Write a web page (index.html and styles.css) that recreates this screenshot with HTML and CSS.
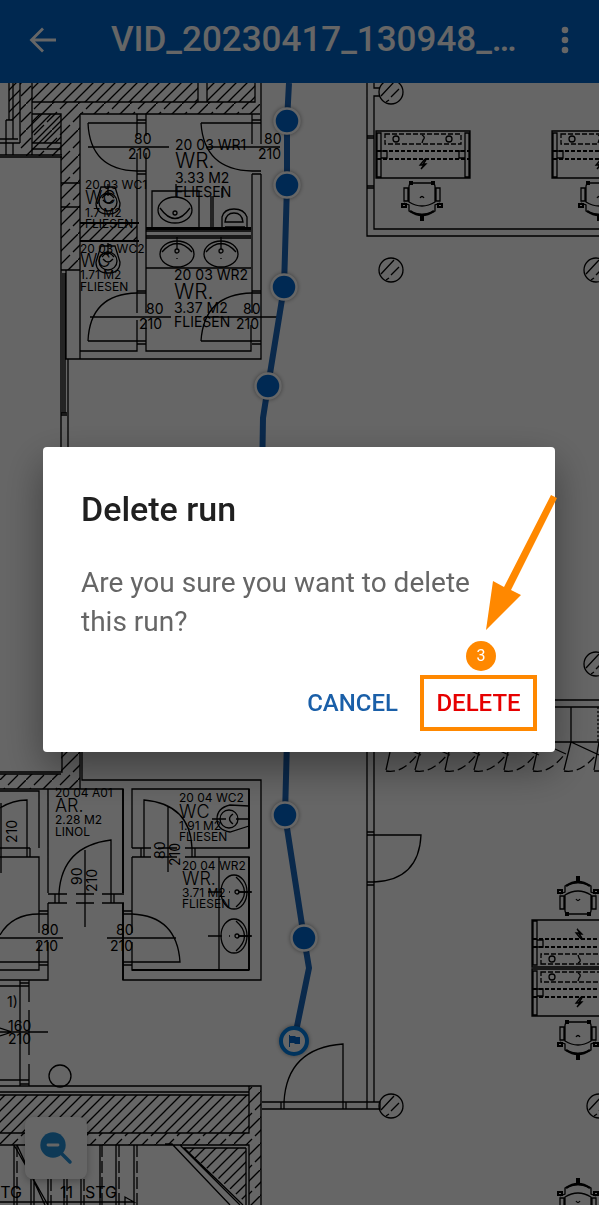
FILE: index.html
```html
<!DOCTYPE html>
<html lang="en">
  <head>
    <meta charset="UTF-8" />
    <meta name="viewport" content="width=device-width, initial-scale=1.0" />
    <title>Delete run</title>
    <link rel="stylesheet" href="styles.css">
  </head>
  <body>
    <div class="screen">
      <header class="app-bar">
        <button class="icon-button" type="button" aria-label="Back">
          <svg width="28" height="28" viewBox="0 0 28 28"><path d="M27 14H3M14 2.500L2.500 14 14 25.500" fill="none" stroke="currentColor" stroke-width="2.800" /></svg>
        </button>
        <h1 class="run-name">VID_20230417_130948_…</h1>
        <button class="icon-button" type="button" aria-label="More options">
          <svg width="8" height="28" viewBox="0 0 8 28"><g fill="currentColor"><circle cx="4" cy="4" r="3.300" /><circle cx="4" cy="14" r="3.300" /><circle cx="4" cy="24" r="3.300" /></g></svg>
        </button>
      </header>

      <main class="plan">
        <svg class="drawing" viewBox="0 83 599 1122" role="img" aria-label="Floor plan">
          <defs>
            <pattern id="hatch" width="11" height="11" patternUnits="userSpaceOnUse">
              <path d="M-2 13L13 -2M-2 2L2 -2M9 13L13 9" />
            </pattern>
            <pattern id="wall" width="26" height="26" patternUnits="userSpaceOnUse">
              <path d="M-1 27L27 -1" />
              <path d="M-1 14L5 8M8 5L14 -1M12 27L18 21M21 18L27 12" />
            </pattern>
            <g id="desk">
              <path d="M0 0H94V47H0ZM1 2H5V46H1ZM89 2H93V46H89ZM5 20H11V27H5ZM83 20H89V27H83Z" />
              <path d="M9 3H85V13H9Z" stroke-dasharray="5 2" />
              <path d="M1 20H93M1 28H93" stroke-width="2" stroke-dasharray="4 2" />
              <circle cx="20" cy="8" r="3" />
              <circle cx="73" cy="8" r="3" />
              <path d="M46 4Q50 6 47 9L46 12" />
              <path d="M49 28L44 34H48L45 38M50 29L47 33H50L45 38" />
            </g>
            <g id="chair">
              <path d="M-12 0H12L13 3V19Q0 27 -13 19V3ZM-18 5H-14V18H-18ZM14 5H18V18H14Z" />
              <path d="M-18 20L-13 22V28Q0 35 13 28V22L18 20M-2 15Q0 12 2 15" />
              <path d="M-12 28Q0 36 12 28" stroke-width="2.500" />
              <path d="M-20 21H-16V24H-20ZM16 21H20V24H16ZM-1 32H1V37H-1ZM-12 -1H-10V1H-12ZM10 -1H12V1H10Z" stroke-width="2" />
            </g>
            <g id="column">
              <circle r="12" />
              <path d="M-10 4L3 -10M0 5L8 -3M-5 10L-2 8" />
            </g>
            <g id="basin">
              <ellipse rx="17" ry="13" />
              <path d="M-15 -2Q0 -19 15 -2M0 -17V-5" />
              <circle cy="-3" r="2" />
              <path d="M0 4V5" />
            </g>
            <g id="toilet">
              <circle r="9" />
              <path d="M-12 1L-7 -15H7L12 1Q12 12 0 12T-12 1M-5 -2Q0 4 5 -2M-6 -4Q0 -12 6 -4M0 -18V-6" />
            </g>
          </defs>

          <g class="hatching">
            <path fill="url(#hatch)" d="M32 83H198V102H32ZM207 83H255V102H207ZM32 114H61V143H32ZM9 83H20V120H9ZM80 223H137V241H80ZM0 1095H249V1133H0ZM184 1148H246V1203Z" />
            <path fill="url(#wall)" d="M20 83H32V102H260V114H80V270H61V156H20ZM61 752H80V789H0V774H61ZM249 1087H261V1205H249V1145H0V1133H249Z" />
          </g>

          <g class="lines">
            <!-- upper left block -->
            <path d="M32 83V155M198 83V102M207 83V102M255 83V102H32M9 83V120M13 83V139M20 83V143M6 120H13M0 139H18M0 143H20M6 120V155M13 143V155M0 155H62M0 157H62M32 114H61V155M32 143H61M32 149H61" />
            <path d="M61 156V447M80 114V359M80 114H260M261 83V144M261 174V359H66V270M61 183H80M61 207H80M61 270H80M63 273V413M65 273V413M61 413H67M61 415H67M68 359V447" />
            <path d="M137 114V136M137 153V313M146 114V136M146 153V313M137 320V351H80M146 320V351H251V325M252 114V144M252 174V313M137 120H146M88 123H146M137 171H146M137 174H146M137 291H146M137 293H146M88 341H146M137 344H146M252 120H261M201 123H261M252 171H261M252 174H261M252 291H261M252 293H261M201 341H261M252 344H261" />
            <path d="M88 123Q90 170 137 171M201 123Q204 170 252 171M88 341Q90 294 137 293M201 341Q204 294 252 293M88 147H169M207 147H280M90 317H171M205 317H277" />
            <path d="M80 223H139M80 241H139M146 228H251M146 229H251" stroke-width="2.200" />
            <path d="M146 231H251M146 236H251M146 238H251M146 268H251M152 227V191H199V227M211 196V227M213 196V227M176 184V197M222 188V198M222 227V217Q224 209 234 209T247 217V227M225 222Q226 213 234 213T243 222ZM225 227H245" />
            <ellipse cx="175" cy="210" rx="17" ry="13" />
            <path d="M160 208Q175 229 190 208" /><circle cx="175" cy="213" r="2" />
            <use href="#basin" x="177" y="254" /><use href="#basin" x="221" y="254" />
            <use href="#toilet" x="108" y="202" /><use href="#toilet" x="108" y="261" />

            <!-- upper right office -->
            <path d="M367 83V236H599M374 83V88H380M380 96H374V229H599M367 136H374M367 138H374M367 186H374M367 188H374" />
            <use href="#desk" x="376" y="131" /><use href="#desk" x="552" y="131" />
            <use href="#chair" x="422" y="183" /><use href="#chair" x="599" y="183" />
            <use href="#column" x="391" y="92" /><use href="#column" x="391" y="270" /><use href="#column" x="596" y="270" />
            <use href="#column" x="596" y="664" /><use href="#column" x="391" y="1106" /><use href="#column" x="599" y="1106" />

            <!-- folding wall -->
            <path d="M555 700H599M555 707H599M571 707V742M555 742H599M571 742L599 755M555 749L566 754M571 742L564 770M599 742L594 770" />
            <path d="M598 707V742" stroke-dasharray="2 2" />
            <path d="M390 752L386 770M420 752L415 770M449 752L445 770M479 752L474 770M508 752L504 770M537 752L533 770M412 751L421 755M441 751L450 755M471 751L480 755M500 751L509 755M530 751L539 755" />
            <path d="M386 771Q402 774 417 755M415 771Q431 774 447 755M445 771Q461 774 476 755M474 771Q490 774 506 755M504 771Q520 774 535 755M533 771Q549 774 564 755M564 771Q580 774 596 755M594 771H599" stroke-dasharray="9 4" />

            <!-- lower corridor -->
            <path d="M367 752V1109H262M374 752V1102M367 832H374M367 835H421Q419 880 374 882H367M367 885H374M262 1102H380V1109H367M281 1102V1109M284 1109V1102Q287 1048 343 1044V1109M346 1102V1109" />
            <use href="#desk" x="532" y="969" /><use href="#desk" transform="translate(532 967) scale(1 -1)" />
            <use href="#chair" x="578" y="1022" />
            <use href="#chair" transform="translate(578 914) scale(1 -1)" /><use href="#chair" transform="translate(578 1216) scale(1 -1)" />

            <!-- lower left rooms -->
            <path d="M0 772H62V752M0 774H61M80 752V789M82 752V780H261V980H123V903M0 789H123V893M0 791H39V848M48 789V893M0 848H30M0 857H39V933M39 942V970H0M27 848V857M30 848V857M27 848V800Q13 800 0 808M1 803V873" />
            <path d="M132 848V789H249V848H185M132 848H151M132 857H151M158 848H177M158 857H177M185 857H249V970H132V942M132 857V933M141 848V857M144 857V800Q190 804 192 848V857M195 848V857M168 806V872M219 857V970" />
            <path d="M48 894H67M76 894H94M102 894H124M48 903H67M76 903H94M102 903H124M55 894V903M59 903V893Q62 846 111 840V903M114 894V903M85 850V927" />
            <path d="M48 903V933M48 942V980H0M39 911H48M39 914H48M39 914Q12 914 0 935M0 938H63M0 962H48M39 965H48M123 911H132M123 914H132Q177 916 180 962H123M123 965H132M107 938H176" />
            <path d="M249 789V848M249 857V970M132 970H249M123 789V893M123 903V980" stroke-width="1.800" />
            <circle cx="229" cy="819" r="9" /><path d="M249 806L230 805Q217 808 217 819T230 832L249 826M212 819H226M236 819H249M233 814Q226 819 233 824" />
            <use href="#basin" transform="translate(234 892) rotate(90)" /><use href="#basin" transform="translate(234 936) rotate(90)" />
            <path d="M208 892H222M208 936H222M238 892H252M238 936H252" />

            <!-- stairwell -->
            <path d="M20 980V1086M29 980V1002M29 1010V1055M29 1064V1086M0 986H29M20 983H29M0 1032H48M0 1028L12 1032 0 1036M0 1080H29M20 1084H29" />
            <circle cx="60" cy="1076" r="11" />
            <path d="M0 1086H261V1205M0 1092H249M0 1095H249M249 1086V1133H0M0 1145H249V1205M246 1148H184L243 1205M246 1148V1205M165 1144H172L230 1205M180 1145L240 1205" />
            <path d="M14 1145V1205M31 1179V1205M34 1179V1205M48 1179V1205M64 1179V1205M81 1179V1205M100 1145V1205M116 1145V1205M134 1145V1205M14 1145L48 1205M17 1145L45 1205M0 1202H134L125 1197V1205" />
            <path d="M17 1145V1205M51 1179V1205M67 1179V1205M84 1179V1205M102 1145V1205M119 1145V1205M137 1145V1205" stroke-dasharray="12 4" />
          </g>

          <g class="labels">
            <text x="134" y="144">80</text><text x="128" y="159">210</text>
            <text x="264" y="144">80</text><text x="258" y="159">210</text>
            <text x="175" y="150">20 03 WR1</text><text class="name" x="175" y="168">WR.</text><text x="175" y="183">3.33 M2</text><text x="175" y="197">FLIESEN</text>
            <text x="174" y="280">20 03 WR2</text><text class="name" x="174" y="299">WR.</text><text x="174" y="313">3.37 M2</text><text x="174" y="327">FLIESEN</text>
            <text x="146" y="314">80</text><text x="139" y="329">210</text>
            <text x="243" y="314">80</text><text x="236" y="329">210</text>
            <text x="41" y="935">80</text><text x="35" y="951">210</text>
            <text x="116" y="935">80</text><text x="110" y="951">210</text>
            <text x="7" y="1007">1)</text><text x="8" y="1031">160</text><text x="8" y="1044">210</text>
            <text transform="translate(17 843) rotate(-90)">210</text>
            <text transform="translate(82 885) rotate(-90)">90</text><text transform="translate(97 892) rotate(-90)">210</text>
            <text transform="translate(165 859) rotate(-90)">80</text><text transform="translate(180 866) rotate(-90)">210</text>
            <g class="small">
              <text x="85" y="189">20 03 WC1</text><text class="name" x="85" y="204">WC</text><text x="85" y="217">1.7 M2</text><text x="85" y="228">FLIESEN</text>
              <text x="80" y="253">20 03 WC2</text><text class="name" x="80" y="267">WC</text><text x="80" y="279">1.71 M2</text><text x="80" y="291">FLIESEN</text>
              <text x="55" y="797">20 04 A01</text><text class="name" x="55" y="812">AR.</text><text x="55" y="824">2.28 M2</text><text x="55" y="836">LINOL</text>
              <text x="179" y="802">20 04 WC2</text><text class="name" x="179" y="818">WC</text><text x="179" y="830">1.91 M2</text><text x="179" y="841">FLIESEN</text>
              <text x="182" y="870">20 04 WR2</text><text class="name" x="182" y="885">WR.</text><text x="182" y="897">3.71 M2</text><text x="182" y="908">FLIESEN</text>
            </g>
            <g class="stairs"><text x="-10" y="1198">STG</text><text x="60" y="1198">11</text><text x="85" y="1198">STG</text></g>
          </g>

          <g class="run">
            <path class="route" d="M289 83L287 121 287 185 284 287 268 386 263 418 262 480 287 740 285 815 304 938 309 968 294 1041" />
            <circle cx="287" cy="121" r="12.500" /><circle cx="287" cy="185" r="12.500" /><circle cx="284" cy="287" r="12.500" />
            <circle cx="268" cy="386" r="12.500" /><circle cx="285" cy="815" r="12.500" /><circle cx="304" cy="938" r="12.500" />
            <circle class="finish" cx="294" cy="1041" r="13" />
            <path class="flag" d="M289 1047V1035H290V1036H295L296 1037H300V1044H295L294 1043H290V1047Z" />
          </g>
        </svg>
        <button class="zoom-out" type="button" aria-label="Zoom out">
          <svg width="34" height="34" viewBox="0 0 34 34"><path d="M21 21L31 31" stroke="currentColor" stroke-width="3.500" stroke-linecap="round" /><circle cx="14" cy="14" r="12.700" fill="currentColor" /><path d="M9 14H19" stroke="#fff" stroke-width="2.800" stroke-linecap="round" /></svg>
        </button>
      </main>
    </div>

    <div class="scrim">
      <section class="dialog" role="dialog" aria-modal="true" aria-labelledby="dialog-title">
        <h2 class="dialog-title" id="dialog-title">Delete run</h2>
        <p class="dialog-text">Are you sure you want to delete this run?</p>
        <div class="actions">
          <button class="action" type="button">CANCEL</button>
          <div class="step">
            <button class="action delete" type="button">DELETE</button>
            <span class="badge">3</span>
          </div>
        </div>
        <svg class="arrow" width="72" height="136" viewBox="485 495 72 136" aria-hidden="true"><path d="M551 495L557 498 511 590 521 595 486 630 493 581 504 587Z" fill="#ff8800" /></svg>
      </section>
    </div>
  </body>
</html>
```
FILE: styles.css
```css
* {
  box-sizing: border-box;
}

body {
  margin: 0;
  font-family: Roboto, sans-serif;
  background: #fff;
}

button {
  margin: 0;
  padding: 0;
  border: 0;
  background: none;
  font: inherit;
  color: inherit;
}

svg {
  display: block;
}

.screen {
  display: flex;
  flex-direction: column;
  min-height: 100vh;
}

.app-bar {
  display: flex;
  align-items: center;
  height: 83px;
  padding: 0 30px 3px 29px;
  background: #0064c8;
  color: #fff;
}

.run-name {
  flex: 1;
  min-width: 0;
  margin: 0 24px 0 54px;
  overflow: hidden;
  font-size: 35px;
  font-weight: 500;
  line-height: 44px;
  white-space: nowrap;
}

/* floor plan */
.plan {
  position: relative;
  flex: 1;
  overflow: hidden;
}

.drawing {
  width: 100%;
  height: auto;
}

.lines,
.drawing pattern path {
  fill: none;
  stroke: #000;
  stroke-width: 1.3px;
}

.labels {
  font-family: Inter, sans-serif;
  font-size: 14px;
}

.labels .name {
  font-size: 21px;
  font-weight: 300;
}

.labels .small {
  font-size: 12px;
}

.small .name {
  font-size: 18px;
}

.labels .stairs {
  font-size: 16px;
}

.run circle {
  fill: #0068d0;
  stroke: #fff;
  stroke-width: 2.5px;
  filter: drop-shadow(0 0 2px rgba(0, 0, 0, 0.4));
}

.run .route {
  fill: none;
  stroke: #1a66bc;
  stroke-width: 6px;
}

.run .finish {
  fill: #fff;
  stroke: #0080e8;
  stroke-width: 4px;
}

.flag {
  fill: #0068d0;
}

.zoom-out {
  position: absolute;
  left: 25px;
  bottom: 26px;
  display: grid;
  place-items: center;
  width: 62px;
  height: 62px;
  border-radius: 8px;
  background: #fff;
  color: #2490d8;
  box-shadow: 0 2px 8px rgba(0, 0, 0, 0.3);
}

/* confirmation */
.scrim {
  position: fixed;
  inset: 0;
  display: grid;
  align-items: center;
  padding: 0 44px 6px 43px;
  background: rgba(0, 0, 0, 0.6);
}

.dialog {
  position: relative;
  padding: 40px 18px 21px 38px;
  border-radius: 4px;
  background: #fff;
  box-shadow: 0 16px 40px rgba(0, 0, 0, 0.4);
}

.dialog-title {
  margin: 0 0 32px;
  font-size: 34px;
  font-weight: 500;
  line-height: 44px;
  color: #202020;
}

.dialog-text {
  margin: 0 0 34px;
  padding-right: 40px;
  font-size: 28px;
  line-height: 39px;
  color: #666;
}

.actions {
  display: flex;
  justify-content: flex-end;
  gap: 22px;
}

.action {
  height: 56px;
  font-size: 24px;
  font-weight: 500;
  color: #1a5fa8;
}

.step {
  position: relative;
}

.delete {
  width: 117px;
  border: 4px solid #ff8800;
  color: #e60000;
}

.badge {
  position: absolute;
  top: -34px;
  left: 46px;
  width: 30px;
  height: 30px;
  border-radius: 50%;
  background: #ff8800;
  color: #fff;
  font-size: 16px;
  line-height: 30px;
  text-align: center;
}

.arrow {
  position: absolute;
  top: 48px;
  right: -2px;
}
```
